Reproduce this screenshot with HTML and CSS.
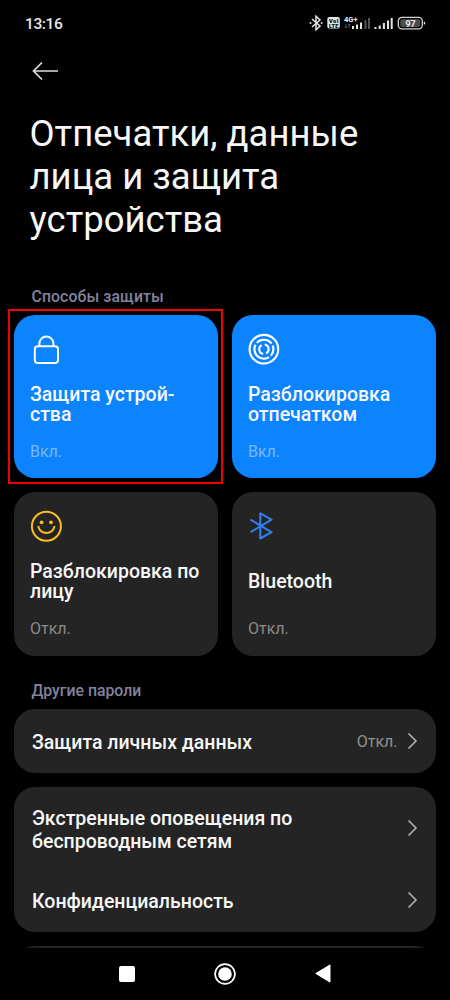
FILE: index.html
```
<!DOCTYPE html>
<html lang="ru">
<head>
<meta charset="utf-8">
<title>Отпечатки, данные лица и защита устройства</title>
<link rel="stylesheet" href="styles.css">
</head>
<body>
<div class="screen">
  <header class="status">
    <span class="time">13:16</span>
    <svg class="status-icons" width="120" height="20" viewBox="0 0 120 20">
      <g fill="none" stroke="#e4e4e4" stroke-width="1.5">
        <path d="M3 5l8 7-4 3.7V2.3l4 3.7-8 7"/>
      </g>
      <circle cx="1.5" cy="9" r="1" fill="#ddd"/><circle cx="12.7" cy="9" r="1" fill="#ddd"/>
      <rect x="18.3" y="3" width="12.5" height="11.5" rx="2" fill="#e4e4e4"/>
      <text class="tiny dark" x="19.9" y="8.5" textLength="9.5">VoI</text>
      <text class="tiny dark" x="19.9" y="13.6" textLength="9.5">LTE</text>
      <text class="net" x="35" y="7.8" textLength="13.5">4G+</text>
      <path d="M37 10v4M35.8 12.5L37 14l1.2-1.5M40.2 14v-4M39 11.3l1.2-1.4 1.2 1.4" stroke="#666" stroke-width=".8" fill="none"/>
      <g fill="#e4e4e4">
        <path d="M43 12h2v3h-2zM47 10.5h2V15h-2zM51 8.5h2V15h-2z"/>
        <path d="M55.5 6h2v9h-2zM59 4h2v11h-2z" fill="#555"/>
        <path d="M65.5 13h2v2h-2zM69.7 11.5h2V15h-2zM73.9 9h2v6h-2zM78 6.5h2V15h-2zM81.7 4h2v11h-2z"/>
      </g>
      <rect x="89.3" y="3.4" width="24" height="11.4" rx="3.5" fill="none" stroke="#d4d4d4" stroke-width="1.3"/>
      <rect x="91.3" y="5.3" width="20" height="7.6" rx="1.8" fill="#4c4c4c"/>
      <path d="M114.8 7.5q1.5 0 1.5 1.6t-1.5 1.6z" fill="#ddd"/>
      <text class="batt" x="96.2" y="12.5" textLength="10.5">97</text>
    </svg>
  </header>

  <svg class="back" width="28" height="20" viewBox="0 0 28 20"><path d="M26 10H1.8M10 1.5L1.5 10l8.5 8.5" fill="none" stroke="#dedede" stroke-width="1.7"/></svg>

  <h1 class="title">Отпечатки, данные<br>лица и защита<br>устройства</h1>

  <h2 class="section">Способы защиты</h2>
  <main class="grid">
    <section class="card on marked">
      <svg class="icon" width="34" height="34" viewBox="0 0 34 34"><g fill="none" stroke="#fff" stroke-width="2"><rect x="5.8" y="14.3" width="23.2" height="16.7" rx="3"/><path d="M10.4 14v-2.4a7 7 0 0 1 14 0V14"/></g></svg>
      <div class="name"><span>Защита устрой-<br>ства</span></div>
      <div class="state">Вкл.</div>
    </section>
    <section class="card on">
      <svg class="icon" width="34" height="34" viewBox="0 0 34 34"><g fill="none" stroke="#fff" stroke-width="2.1"><circle cx="16.9" cy="17.2" r="14.3"/><circle cx="16.9" cy="17.2" r="9.5" pathLength="360" stroke-dasharray="43 14 151 14 101 14 23 0"/><circle cx="16.9" cy="17.2" r="4.7" pathLength="360" stroke-dasharray="60 40 140 40 80 0"/></g></svg>
      <div class="name"><span>Разблокировка<br>отпечатком</span></div>
      <div class="state">Вкл.</div>
    </section>
    <section class="card">
      <svg class="icon" width="34" height="34" viewBox="0 0 34 34"><g fill="none" stroke="#fbbf1c" stroke-width="2"><circle cx="17.4" cy="17.3" r="14.5"/><path d="M9.4 17.8a8.3 8.3 0 0 0 16 0" stroke-linecap="round"/></g><circle cx="12.6" cy="13.3" r="1.9" fill="#fbbf1c"/><circle cx="22" cy="13.3" r="1.9" fill="#fbbf1c"/></svg>
      <div class="name"><span>Разблокировка по<br>лицу</span></div>
      <div class="state">Откл.</div>
    </section>
    <section class="card">
      <svg class="icon" width="34" height="34" viewBox="0 0 34 34"><path d="M3.5 10.6l21 12.6-11.2 6.3V4.3l11.2 6.3-21 12.6" fill="none" stroke="#2f7ff0" stroke-width="2.1" stroke-linejoin="round"/></svg>
      <div class="name"><span>Bluetooth</span></div>
      <div class="state">Откл.</div>
    </section>
  </main>

  <h2 class="section second">Другие пароли</h2>
  <div class="group">
    <div class="row"><span class="label">Защита личных данных</span><span class="value">Откл.</span><svg class="chev" width="11" height="18" viewBox="0 0 11 18"><path d="M1.5 1.5L9 9l-7.5 7.5"/></svg></div>
  </div>
  <div class="group">
    <div class="row tall"><span class="label">Экстренные оповещения по<br>беспроводным сетям</span><svg class="chev" width="11" height="18" viewBox="0 0 11 18"><path d="M1.5 1.5L9 9l-7.5 7.5"/></svg></div>
    <div class="row last"><span class="label">Конфиденциальность</span><svg class="chev" width="11" height="18" viewBox="0 0 11 18"><path d="M1.5 1.5L9 9l-7.5 7.5"/></svg></div>
  </div>
  <div class="peek"><div class="group"></div></div>

  <nav class="nav">
    <svg width="16" height="16" viewBox="0 0 16 16"><rect width="16" height="16" rx="2" fill="#fff"/></svg>
    <svg width="22" height="22" viewBox="0 0 22 22"><circle cx="11" cy="11" r="9.9" fill="none" stroke="#fff" stroke-width="1.7"/><circle cx="11" cy="11" r="6.8" fill="#fff"/></svg>
    <svg width="16" height="19" viewBox="0 0 16 19"><path d="M.8 9.5L15 .9v17.2z" fill="#fff" stroke="#fff" stroke-width="1" stroke-linejoin="round"/></svg>
  </nav>
</div>
</body>
</html>
```
FILE: styles.css
```
* { box-sizing: border-box; }
body { margin: 0; background: #000; }
.screen {
  width: 450px;
  height: 1000px;
  overflow: hidden;
  display: flex;
  flex-direction: column;
  background: #000;
  color: #f7f7f7;
  font-family: Roboto, "Noto Sans", sans-serif;
}
.status {
  height: 61px;
  flex: none;
  display: flex;
  justify-content: space-between;
  align-items: flex-start;
  padding: 14px 21px 0 25px;
}
.time { font-size: 15.5px; line-height: 20px; font-weight: 500; letter-spacing: -.4px; color: #e8e8e8; }
.tiny { font-size: 5.5px; font-weight: 900; }
.dark { fill: #000; }
.net { font-size: 7.5px; font-weight: 700; fill: #e8e8e8; }
.batt { font-size: 9.5px; font-weight: 700; fill: #e8e8e8; }
.back { flex: none; margin-left: 32px; }
.title {
  margin: 31px 0 0 29.5px;
  font-size: 36.5px;
  line-height: 43px;
  font-weight: 400;
}
.section {
  margin: 45.5px 0 8px 31.5px;
  font-size: 15.8px;
  line-height: 20px;
  font-weight: 500;
  letter-spacing: .1px;
  color: #8383a0;
}
.grid {
  display: grid;
  grid-template-columns: 204px 204px;
  grid-auto-rows: 163.5px;
  gap: 14px;
  padding: 0 14px;
}
.card {
  position: relative;
  display: flex;
  flex-direction: column;
  padding: 17px 16px 0;
  border-radius: 21px;
  background: #242424;
}
.on { background: #0c84ff; }
.marked::after {
  content: "";
  position: absolute;
  inset: -5.5px -5px -6px -6px;
  border: 2px solid #f00000;
}
.icon { flex: none; margin-left: -1px; }
.name {
  height: 40px;
  margin-top: 19px;
  display: flex;
  align-items: center;
  font-size: 19.5px;
  line-height: 20px;
  font-weight: 500;
  white-space: nowrap;
}
.state { margin-top: 16.5px; font-size: 16px; line-height: 20px; color: #8a8a8a; }
.on .state { margin-top: 17px; color: #78b9fb; }
.second { margin: 25.5px 0 7.5px 31.5px; letter-spacing: 0; }
.group { margin: 0 14px 14px; border-radius: 21px; background: #242424; flex: none; }
.row { height: 64px; display: flex; align-items: center; padding: 2px 18px 0; }
.tall { height: 83px; }
.last { height: 62px; padding-top: 0; }
.label { flex: 1; padding-top: 1px; font-size: 19.5px; line-height: 23px; font-weight: 500; }
.value { margin-right: 9.5px; font-size: 16px; color: #929292; }
.chev { position: relative; top: -1px; fill: none; stroke: #b0b0b0; stroke-width: 1.6; }
.last .chev { top: -.5px; }
.peek { height: 2px; flex: none; overflow: hidden; }
.peek .group { height: 64px; }
.nav {
  height: 52px;
  flex: none;
  display: flex;
  align-items: center;
  justify-content: space-between;
  padding: 0 119px;
}
```
